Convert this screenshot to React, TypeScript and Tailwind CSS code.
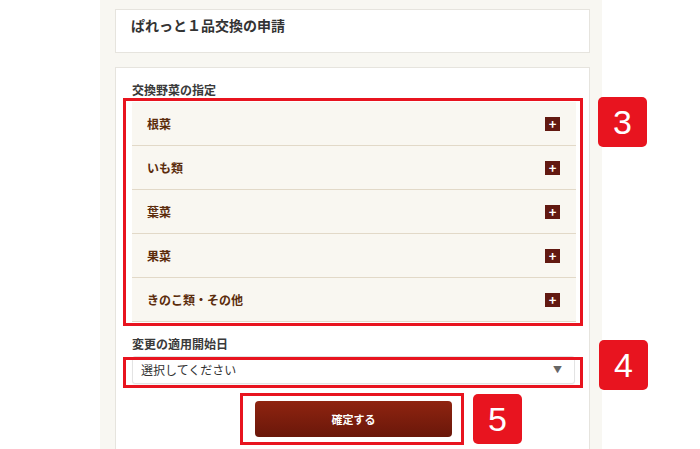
const RUI = ["根菜", "いも類", "葉菜", "果菜", "きのこ類・その他"];

function Badge({ n, className }: { n: string; className: string }) {
  return (
    <div
      className={`absolute flex h-[50px] w-[49px] items-center justify-center rounded-[5px] bg-[#e8141f] font-['Liberation_Sans',sans-serif] text-[34px] leading-none text-white ${className}`}
    >
      {n}
    </div>
  );
}

export default function App() {
  return (
    <div className="relative h-[449px] w-[700px] overflow-hidden bg-white font-['Noto_Sans_CJK_JP',sans-serif]">
      <div className="ml-[100px] h-full w-[502px] bg-[#f8f7f2] pl-[15px] pr-[12px] pt-[9px]">
        <section className="h-[44px] border border-[#e6e4de] bg-white px-[15px] pt-[5px]">
          <h1 className="text-[14px] font-bold text-[#333]">ぱれっと１品交換の申請</h1>
        </section>

        <section className="mt-[14px] h-[400px] border border-[#e6e4de] bg-white px-[16px] pt-[12px]">
          <h2 className="text-[12px] font-bold leading-[20px] text-[#3a3a3a]">交換野菜の指定</h2>

          <ul className="mt-[2px] w-[444px]">
            {RUI.map((r) => (
              <li
                key={r}
                className="flex h-[44px] items-center justify-between border-b border-[#e2d9c8] bg-[#f9f7f1] pl-[15px] pr-[16px]"
              >
                <span className="text-[12px] font-bold text-[#5b2c0c]">{r}</span>
                <span className="flex h-[14px] w-[15px] items-center justify-center bg-[#621911] text-[13px] font-bold leading-none text-white">
                  +
                </span>
              </li>
            ))}
          </ul>

          <p className="mt-[13px] text-[12px] font-bold leading-[18px] text-[#3a3a3a]">変更の適用開始日</p>

          <div className="mt-[3px] flex h-[28px] w-[443px] items-center justify-between rounded-[3px] border border-[#e3e3e3] bg-white pl-[8px] pr-[12px] shadow-[0_1px_1px_rgba(0,0,0,0.04)]">
            <span className="text-[12px] text-[#333]">選択してください</span>
            <span className="text-[9px] text-[#666]">▼</span>
          </div>

          <div className="mt-[17px] flex w-[443px] justify-center">
            <button
              type="button"
              className="h-[36px] w-[197px] rounded-[4px] bg-gradient-to-b from-[#8f2410] to-[#6a170a] text-[11px] font-bold text-white"
            >
              確定する
            </button>
          </div>
        </section>
      </div>

      {/* 注釈の赤枠 */}
      <div className="absolute left-[123px] top-[98px] h-[228px] w-[460px] border-[3px] border-[#e8141f]" />
      <div className="absolute left-[123px] top-[357px] h-[31px] w-[460px] border-[3px] border-[#e8141f]" />
      <div className="absolute left-[240px] top-[393px] h-[52px] w-[224px] border-[3px] border-[#e8141f]" />

      <Badge n="3" className="left-[598px] top-[97px]" />
      <Badge n="4" className="left-[599px] top-[340px]" />
      <Badge n="5" className="left-[473px] top-[394px]" />
    </div>
  );
}
